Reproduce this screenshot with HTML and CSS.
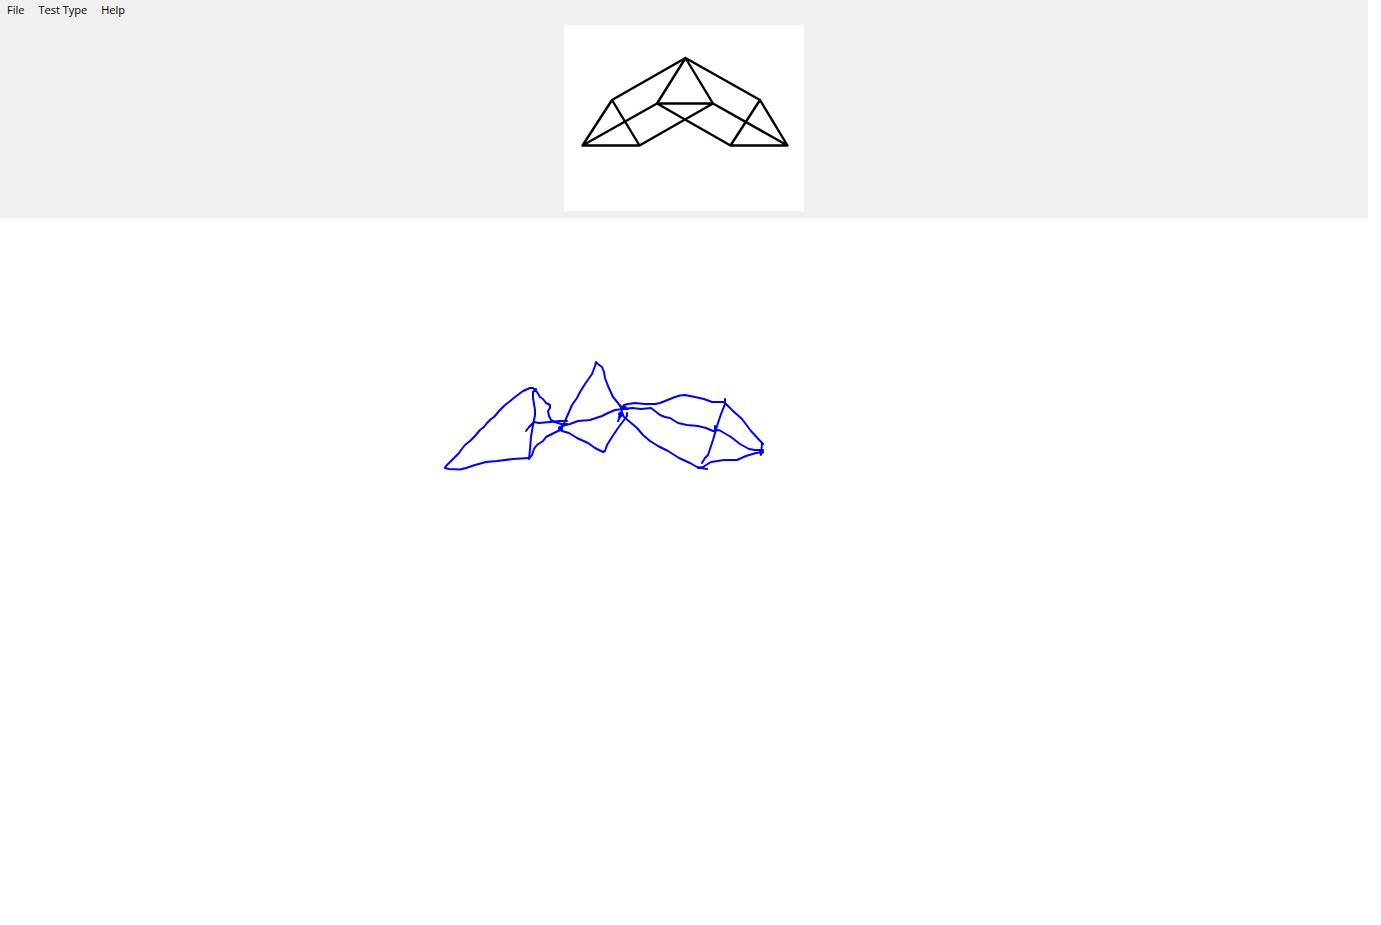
FILE: index.html
```html
<!DOCTYPE html>
<html lang="en">
<head>
<meta charset="utf-8">
<title>Figure Copy Test</title>
<link rel="stylesheet" href="styles.css">
</head>
<body>
<div class="app">
  <header class="panel">
    <nav class="menu" aria-label="Main menu">
      <button class="menu-item" type="button">File</button>
      <button class="menu-item" type="button">Test Type</button>
      <button class="menu-item" type="button">Help</button>
    </nav>
    <div class="figure">
      <svg class="model" viewBox="0 0 240 186" role="img" aria-label="Figure to copy">
        <path d="M18.500 120.500L48 75L121.500 33L196 75L223.500 120.500H166.500L93 78.500H149L75.500 120.500H18.500L93 78.500L121.500 33L149 78.500L223.500 120.500M48 75L75.500 120.500M196 75L166.500 120.500"/>
      </svg>
    </div>
  </header>
  <main class="canvas">
    <svg class="sketch" role="img" aria-label="Drawing area">
      <g transform="translate(0 -218)">
        <path d="M536 390L533 388L530 388L523 391L515 397L509 402L505 405L500 410L494 417L491 419L487 423L484 427L480 430L475 436L470 441L465 445L461 450L459 453L453 459L446 466L445 468L449 469L460 469.500L466 468L475 465L486 462L497 461L513 459L529 458"/>
        <path d="M536 389L533 392L533 398L535 410L535 415L533 425L531 437L530 449L529 459L532 455L534 449L537 445L543 441L546 437L552 434L560 430L563 426L565 421L569 412L572 405L577 398L580 392L585 384L592 374L595 366L596 362L598 364L602 367L604 372L605 378L608 386L613 397L618 403L622 409L621 415L618 421"/>
        <path d="M534 390L537 392L540 397L543 399L546 403L550 405L550 408L548 411L549 416L551 420L555 422L561 424L567 424"/>
        <path d="M526 431L529 427L534 422L539 423L550 422L560 421L567 421"/>
        <path d="M559 429L562 426L570 424L578 421L590 420L596 418L602 416L608 413L615 410L623 409L628 409"/>
        <path d="M560 429L562 431L569 433L577 438L588 443L595 448L603 452L605 451L607 445L612 437L618 428L624 420L627 416L627 413"/>
        <path d="M622 408L624 405L628 404L635 403L645 404L655 404L660 403L665 401L675 397L680 395.500L685 395L695 397L704 399L712 402L724 402L732 410L742 419L751 431L763 444"/>
        <path d="M620 405L623 409L632 408L641 409L651 408L655 411L660 415L665 417L670 418L678 423L687 425L698 426L706 428L713 431L719 430L731 437L740 444L749 449L755 450L763 450"/>
        <path d="M619 417L622 412L624 417L630 422L637 428L643 435L650 441L658 446L668 451L679 458L690 463L697 467L701 468L707 469"/>
        <path d="M725 399L725 404L721 414L717 426L715 433L713 440L710 449L708 455L705 458L702 463"/>
        <path d="M698 468L703 467L711 462L724 460L737 460L746 456L756 453L763 452L760 450L761 455L762 444M715 426L715 433"/>
        <path class="joint" d="M560 428L561 429M622 408L625 408M620 414L621 415M761 452L762 452"/>
      </g>
    </svg>
  </main>
</div>
</body>
</html>
```
FILE: styles.css
```css
* {
  box-sizing: border-box;
}

body {
  margin: 0;
  background: #fff;
  font-family: "Segoe UI", "Open Sans", "Noto Sans", sans-serif;
}

.app {
  display: flex;
  flex-direction: column;
  min-height: 100vh;
  padding-right: 13px;
}

.panel {
  padding-bottom: 7px;
  background: #f0f0f0;
}

.menu {
  display: flex;
  gap: 14px;
  padding: 2px 7px 7px;
}

.menu-item {
  padding: 0;
  border: 0;
  background: none;
  color: #000;
  font-family: inherit;
  font-size: 11px;
  line-height: 16px;
}

.figure {
  width: 240px;
  margin: 0 auto;
  background: #fff;
}

.model {
  display: block;
  width: 100%;
  fill: none;
  stroke: #000;
  stroke-width: 2.4;
  stroke-linejoin: round;
  stroke-linecap: round;
}

.canvas {
  display: flex;
  flex: 1;
}

.sketch {
  width: 100%;
  fill: none;
  stroke: #0000ff;
  stroke-width: 2;
  stroke-linejoin: round;
  stroke-linecap: round;
}

.joint {
  stroke-width: 4;
}
```
